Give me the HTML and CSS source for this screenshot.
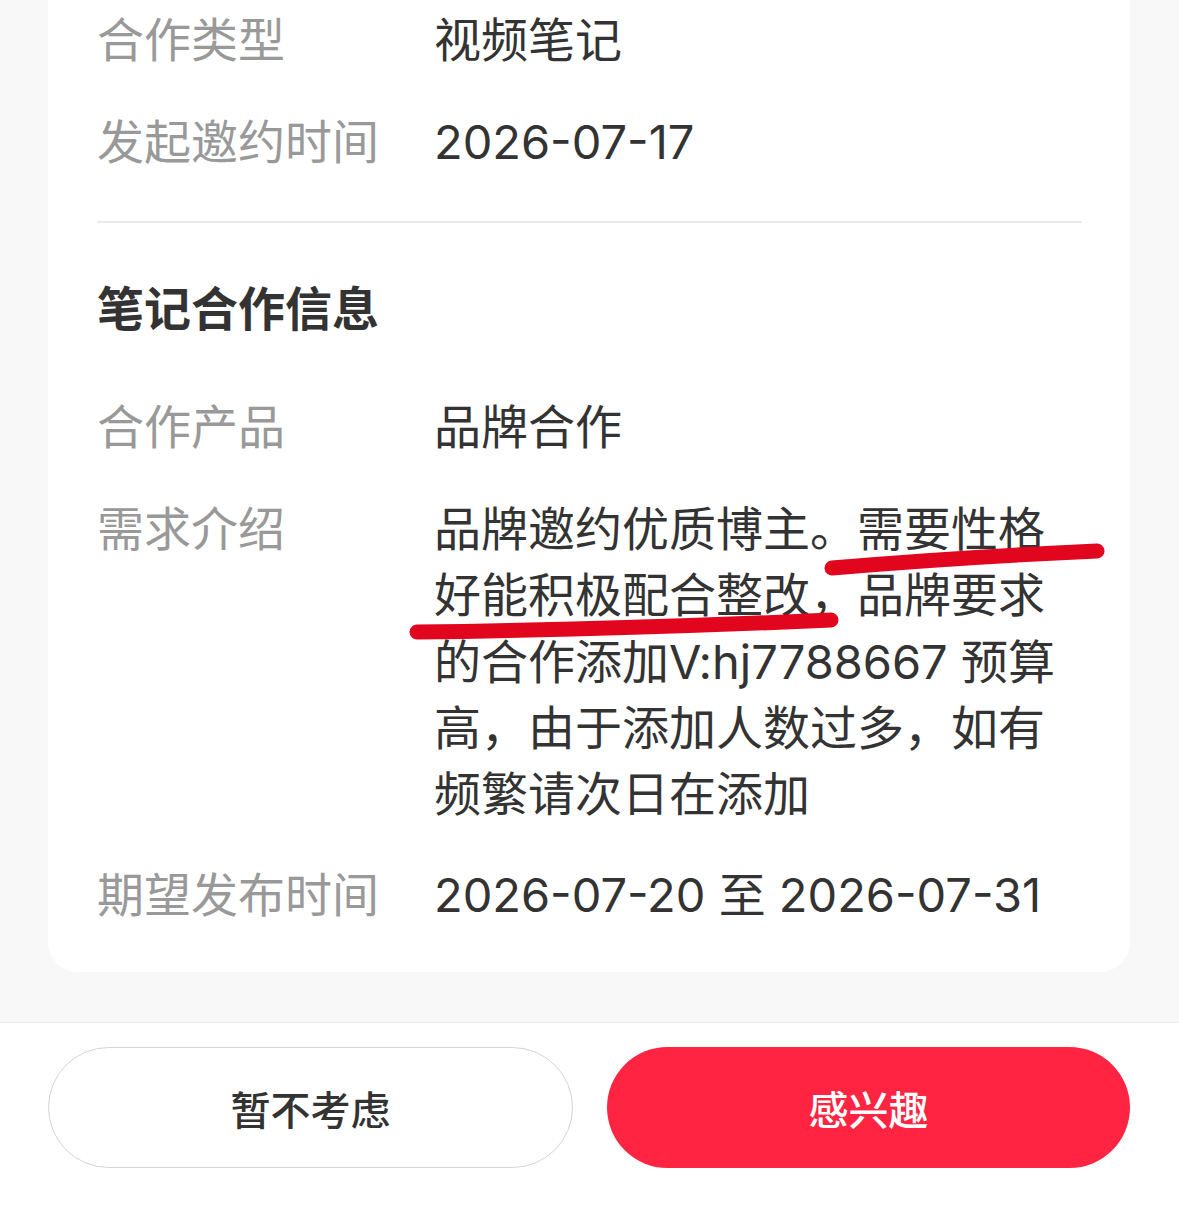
FILE: index.html
```html
<!DOCTYPE html>
<html lang="zh-CN">
<head>
    <meta charset="UTF-8">
    <meta name="viewport" content="width=device-width, initial-scale=1.0">
    <title>合作邀约详情</title>
    <link rel="stylesheet" href="styles.css">
</head>
<body>
    <div class="page">
        <!-- 邀约信息卡片 -->
        <div class="card">
            <div class="row">
                <div class="label">合作类型</div>
                <div class="value">视频笔记</div>
            </div>
            <div class="row">
                <div class="label">发起邀约时间</div>
                <div class="value">2026-07-17</div>
            </div>

            <div class="divider"></div>

            <h2 class="section-title">笔记合作信息</h2>
            <div class="row">
                <div class="label">合作产品</div>
                <div class="value">品牌合作</div>
            </div>
            <div class="row">
                <div class="label">需求介绍</div>
                <div class="value desc">品牌邀约优质博主。需要性格好能积极配合整改，品牌要求的合作添加V:hj7788667 预算高，由于添加人数过多，如有频繁请次日在添加</div>
            </div>
            <div class="row row-last">
                <div class="label">期望发布时间</div>
                <div class="value">2026-07-20 至 2026-07-31</div>
            </div>
        </div>

        <!-- 底部操作栏 -->
        <div class="action-bar">
            <button class="btn btn-later">暂不考虑</button>
            <button class="btn btn-interest">感兴趣</button>
        </div>

        <!-- 手写划线标注 -->
        <svg class="marks" width="1179" height="1222" viewBox="0 0 1179 1222">
            <path d="M832 568 Q960 557 1097 551" />
            <path d="M417 632 Q630 629 831 620" />
        </svg>
    </div>
</body>
</html>
```

FILE: styles.css
```css
/* 页面基础 */
body {
    margin: 0;
    padding: 0;
    background-color: #f8f8f8;
    font-family: Inter, "Noto Sans CJK SC", sans-serif;
    color: #333;
}
.page {
    position: relative;
    height: 1222px;
    overflow: hidden;
}
.card {
    background-color: #fff;
    margin: 0 49px 0 48px;
    padding: 7px 48px 44px 49px;
    border-radius: 0 0 30px 30px;
}
.row {
    display: flex;
    font-size: 47px;
    line-height: 66px;
    margin-bottom: 36px;
}
.row-last {
    margin-top: -1px;
    margin-bottom: 0;
}
.label {
    width: 337px;
    flex-shrink: 0;
    color: #999;
}
.value {
    color: #333;
}
.desc {
    width: 640px;
    line-height: 66.3px;
}
.divider {
    height: 2px;
    background-color: #ebebeb;
    margin: 46px 0 53px;
}
.section-title {
    margin: 0 0 52px;
    font-size: 47px;
    line-height: 66px;
    font-weight: bold;
    color: #333;
}
.action-bar {
    margin-top: 50px;
    background-color: #fff;
    border-top: 1px solid #ececec;
    padding: 24px 49px 0 48px;
    height: 200px;
    display: flex;
    gap: 34px;
}
.btn {
    flex: 1;
    height: 121px;
    border-radius: 61px;
    font-family: "Noto Sans CJK SC", sans-serif;
    font-size: 40px;
    font-weight: 500;
    cursor: pointer;
}
.btn-later {
    background-color: #fff;
    border: 1.5px solid #d4d4d4;
    color: #333;
}
.btn-interest {
    background-color: #ff2442;
    border: none;
    color: #fff;
}
.marks {
    position: absolute;
    top: 0;
    left: 0;
    pointer-events: none;
}
.marks path {
    fill: none;
    stroke: #e2051e;
    stroke-width: 15;
    stroke-linecap: round;
}
```
